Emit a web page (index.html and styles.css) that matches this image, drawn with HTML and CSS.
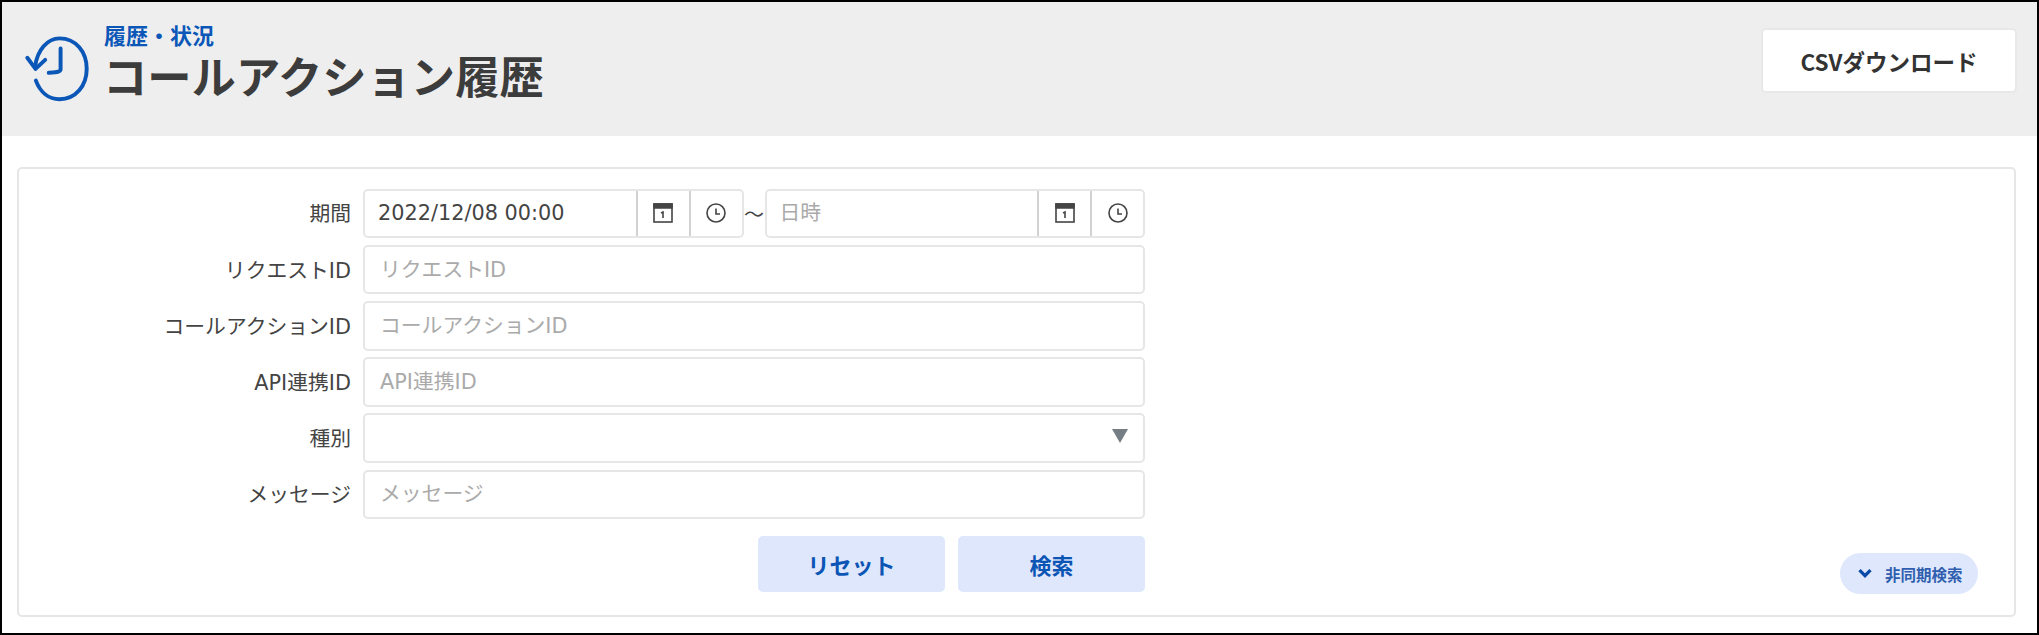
FILE: index.html
```html
<!DOCTYPE html>
<html lang="ja">
<head>
    <meta charset="UTF-8">
    <meta name="viewport" content="width=device-width, initial-scale=1.0">
    <title>コールアクション履歴</title>
    <link rel="stylesheet" href="styles.css">
</head>
<body>
    <div class="frame">
        <header class="page-header">
            <div class="title-block">
                <svg class="history-icon" viewBox="50 100 190 195" aria-hidden="true">
                    <path d="M84 190 C90 145 118 112 152 112 C198 112 228 150 228 197 C228 244 198 282 152 282 C122 282 98 262 86 230"/>
                    <path d="M62 166 L85 197 L112 172"/>
                    <path d="M155 140 V198 C155 204 150 206 122 208"/>
                </svg>
                <div>
                    <p class="subtitle">履歴・状況</p>
                    <h1>コールアクション履歴</h1>
                </div>
            </div>
            <button class="csv-button">CSVダウンロード</button>
        </header>

        <main class="search-card">
            <form class="search-form">
                <div class="form-row">
                    <label>期間</label>
                    <div class="field date-range">
                        <div class="date-box">
                            <input type="text" value="2022/12/08 00:00">
                            <span class="date-btn">
                                <svg viewBox="0 0 20 20"><rect x="1" y="1" width="18" height="18"/><path class="bar" d="M1 1h18v4H1z"/><path d="M8 10l2-1v6"/></svg>
                            </span>
                            <span class="date-btn">
                                <svg viewBox="0 0 20 20"><circle cx="10" cy="10" r="9"/><path d="M10 5.5V11h4"/></svg>
                            </span>
                        </div>
                        <span class="tilde">～</span>
                        <div class="date-box">
                            <input type="text" placeholder="日時">
                            <span class="date-btn">
                                <svg viewBox="0 0 20 20"><rect x="1" y="1" width="18" height="18"/><path class="bar" d="M1 1h18v4H1z"/><path d="M8 10l2-1v6"/></svg>
                            </span>
                            <span class="date-btn">
                                <svg viewBox="0 0 20 20"><circle cx="10" cy="10" r="9"/><path d="M10 5.5V11h4"/></svg>
                            </span>
                        </div>
                    </div>
                </div>
                <div class="form-row">
                    <label>リクエストID</label>
                    <input class="field" type="text" placeholder="リクエストID">
                </div>
                <div class="form-row">
                    <label>コールアクションID</label>
                    <input class="field" type="text" placeholder="コールアクションID">
                </div>
                <div class="form-row">
                    <label>API連携ID</label>
                    <input class="field" type="text" placeholder="API連携ID">
                </div>
                <div class="form-row">
                    <label>種別</label>
                    <div class="field select-wrap">
                        <select></select>
                    </div>
                </div>
                <div class="form-row">
                    <label>メッセージ</label>
                    <input class="field" type="text" placeholder="メッセージ">
                </div>
                <div class="form-actions">
                    <button type="button" class="action-button">リセット</button>
                    <button type="button" class="action-button">検索</button>
                </div>
            </form>
            <button class="async-toggle">
                <svg viewBox="0 0 14 10" aria-hidden="true"><path d="M2 2l5 5 5-5"/></svg>
                非同期検索
            </button>
        </main>
    </div>
</body>
</html>
```

FILE: styles.css
```css
/* Reset */
body, h1, p {
    margin: 0;
    padding: 0;
}

* {
    box-sizing: border-box;
}

body {
    font-family: 'DejaVu Sans', 'Noto Sans CJK JP', sans-serif;
    color: #444;
    background: #fff;
}

input, select, button {
    font-family: inherit;
}

.frame {
    width: 2039px;
    height: 635px;
    border: 2px solid #000;
    overflow: hidden;
}

/* Header */
.page-header {
    display: flex;
    justify-content: space-between;
    align-items: flex-start;
    height: 134px;
    padding: 26px 20px 0 21px;
    background: #eee;
}

.title-block {
    display: flex;
    align-items: flex-start;
    gap: 12px;
}

.history-icon {
    width: 68px;
    height: 70px;
    margin-top: 6px;
    fill: none;
    stroke: #0b57b8;
    stroke-width: 11;
    stroke-linecap: round;
    stroke-linejoin: round;
}

.subtitle {
    font-family: 'Noto Sans CJK JP', sans-serif;
    font-size: 22px;
    font-weight: 700;
    line-height: 22px;
    margin-top: -5px;
    margin-left: 1px;
    color: #0b57b8;
}

h1 {
    font-family: 'Noto Sans CJK JP', sans-serif;
    font-size: 44.3px;
    font-weight: 700;
    line-height: 52px;
    margin-top: 4px;
    color: #3c3c3c;
}

.csv-button {
    width: 256px;
    height: 65px;
    background: #fff;
    border: 2px solid #e8e8e8;
    border-radius: 5px;
    font-family: 'Noto Sans CJK JP', sans-serif;
    font-size: 22.5px;
    font-weight: 700;
    color: #333;
}

/* Search card */
.search-card {
    display: flex;
    justify-content: space-between;
    align-items: flex-end;
    height: 450px;
    margin: 31px 21px 0 15px;
    padding: 19px 36px 21px 0;
    border: 2px solid #e6e6e6;
    border-radius: 5px;
}

.search-form {
    display: flex;
    flex-direction: column;
    gap: 7px;
    width: 1126px;
}

.form-row {
    display: flex;
    align-items: center;
    gap: 12px;
    height: 49.2px;
}

.form-row label {
    width: 332px;
    text-align: right;
    font-size: 20.8px;
    margin-top: -2px;
}

.field {
    width: 782px;
    height: 49.5px;
    padding: 0 15px;
    border: 2px solid #e6e6e6;
    border-radius: 5px;
    font-size: 20.8px;
    color: #444;
    background: #fff;
}

input::placeholder {
    color: #aaa;
}

input:focus, select:focus {
    outline: none;
}

/* Date range */
.date-range {
    display: flex;
    align-items: center;
    padding: 0;
    border: none;
}

.date-box {
    display: flex;
    flex: 1 1 0;
    min-width: 0;
    height: 49.5px;
    border: 2px solid #e6e6e6;
    border-radius: 5px;
}

.date-box input {
    flex: 1;
    min-width: 0;
    padding: 0 13px;
    border: none;
    background: none;
    font-size: 20.8px;
    color: #444;
}

.date-btn {
    display: flex;
    align-items: center;
    justify-content: center;
    width: 53px;
    border-left: 2px solid #d2d2d2;
}

.date-btn svg {
    width: 20px;
    height: 20px;
    fill: none;
    stroke: #444;
    stroke-width: 1.6;
}

.date-btn svg .bar {
    fill: #444;
}

.tilde {
    width: 21px;
    font-family: 'Noto Sans CJK JP', sans-serif;
    font-size: 20px;
    text-align: center;
}

/* Select */
.select-wrap {
    position: relative;
    padding: 0;
}

.select-wrap select {
    width: 100%;
    height: 100%;
    border: none;
    background: none;
    appearance: none;
}

.select-wrap::after {
    content: '';
    position: absolute;
    top: 14px;
    right: 15px;
    border-left: 8px solid transparent;
    border-right: 8px solid transparent;
    border-top: 14px solid #767e85;
}

/* Buttons */
.form-actions {
    display: flex;
    justify-content: flex-end;
    gap: 13px;
    margin: 10px 0 2px;
}

.action-button {
    width: 187px;
    height: 56px;
    border: none;
    border-radius: 5px;
    background: #dfe7fd;
    color: #0b55b5;
    font-family: 'Noto Sans CJK JP', sans-serif;
    font-size: 22px;
    font-weight: 700;
}

.async-toggle {
    display: flex;
    align-items: center;
    gap: 12px;
    width: 138px;
    height: 41px;
    padding: 0 0 0 17px;
    border: none;
    border-radius: 21px;
    background: #dfe7fd;
    color: #2f5fae;
    font-family: 'Noto Sans CJK JP', sans-serif;
    font-size: 15.5px;
    font-weight: 700;
    white-space: nowrap;
}

.async-toggle svg {
    width: 16px;
    height: 11px;
    fill: none;
    stroke: #0b4aa6;
    stroke-width: 3;
}
```
